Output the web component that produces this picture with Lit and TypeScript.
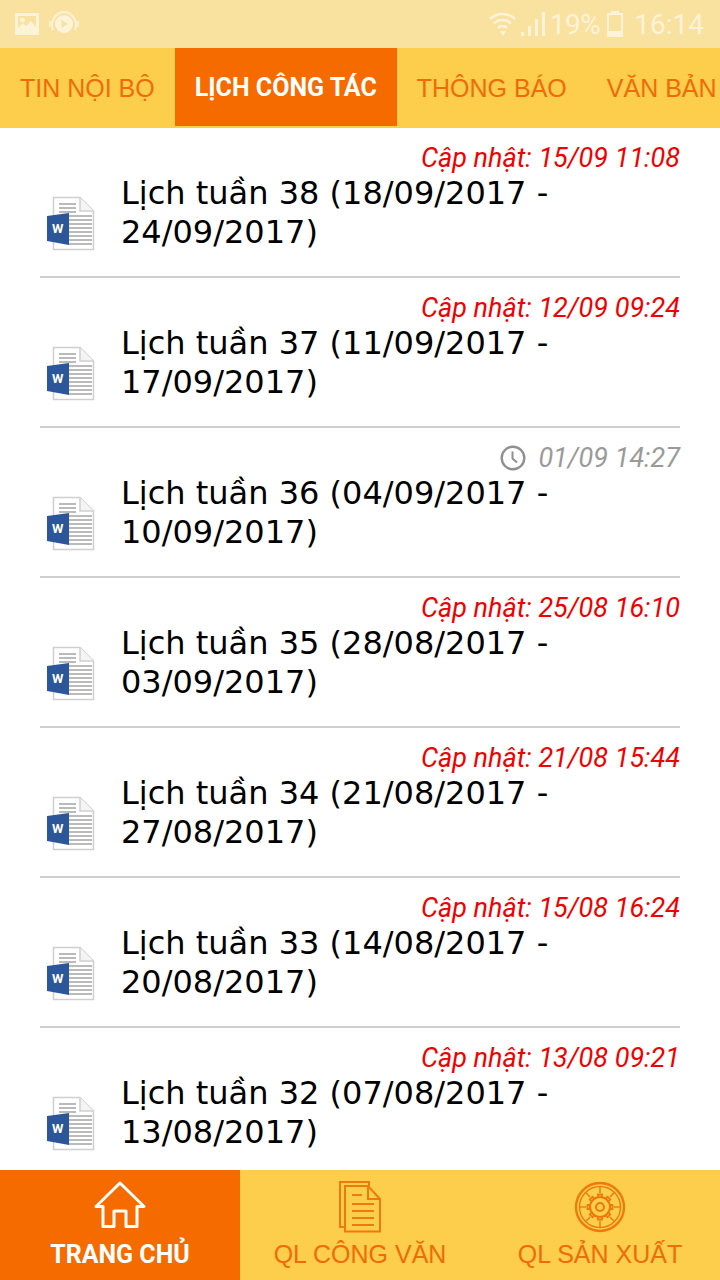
import { LitElement, html, css, svg } from "lit";
import { customElement } from "lit/decorators.js";

const rows = [
  { title: "Lịch tuần 38 (18/09/2017 - 24/09/2017)", date: "15/09 11:08", updated: true },
  { title: "Lịch tuần 37 (11/09/2017 - 17/09/2017)", date: "12/09 09:24", updated: true },
  { title: "Lịch tuần 36 (04/09/2017 - 10/09/2017)", date: "01/09 14:27", updated: false },
  { title: "Lịch tuần 35 (28/08/2017 - 03/09/2017)", date: "25/08 16:10", updated: true },
  { title: "Lịch tuần 34 (21/08/2017 - 27/08/2017)", date: "21/08 15:44", updated: true },
  { title: "Lịch tuần 33 (14/08/2017 - 20/08/2017)", date: "15/08 16:24", updated: true },
  { title: "Lịch tuần 32 (07/08/2017 - 13/08/2017)", date: "13/08 09:21", updated: true },
];

const tabs = ["TIN NỘI BỘ", "LỊCH CÔNG TÁC", "THÔNG BÁO", "VĂN BẢN MỚI"];

const wordIcon = html`<svg class="word" width="50" height="58" viewBox="0 0 50 58">
  <path d="M7.5 1.5H34L47.5 15V53.500H7.500Z" fill="#fff" stroke="#cfcfcf" stroke-width="1.500"/>
  <path d="M34 1.500V15H47.500" fill="#f4f4f4" stroke="#cfcfcf" stroke-width="1.500"/>
  ${[8, 12, 16].map((y) => svg`<path d="M13 ${y}H30" stroke="#a9a9a9" stroke-width="1.600"/>`)}
  ${[20, 24, 28, 32, 36, 40, 44, 48].map((y) => svg`<path d="M23 ${y}H46" stroke="#a9a9a9" stroke-width="1.600"/>`)}
  <path d="M1 20L23 17V49L1 45Z" fill="#2b579a"/>
  <text x="6" y="37" font-family="Roboto, sans-serif" font-size="13" font-weight="700" fill="#fff">W</text>
</svg>`;

const clockIcon = html`<svg class="clock" width="26" height="26" viewBox="0 0 26 26" fill="none" stroke="#8f8f8f" stroke-width="2.400">
  <circle cx="13" cy="13" r="11.300"/>
  <path d="M12.500 6.500V13.500L17 17.500" stroke-width="2"/>
</svg>`;

const homeIcon = html`<svg width="52" height="48" viewBox="0 0 52 48" fill="none" stroke="#fff" stroke-width="3" stroke-linejoin="round" stroke-linecap="round">
  <path d="M2 25.500L26 2L50 25.500H43V45.500H32V30H20V45.500H9V25.500Z"/>
</svg>`;

const docIcon = html`<svg width="44" height="52" viewBox="0 0 44 52" fill="none" stroke="#ec7a0c" stroke-width="2">
  <path d="M7 46H2V1H31V5"/>
  <path d="M7 5H30L42 18V50.500H7Z"/>
  <path d="M30 5V18H42"/>
  <path d="M14 14H24M14 23H36M14 30H36M14 37H36M14 44H36" stroke-width="2.200"/>
</svg>`;

const spokes = [0, 45, 90, 135, 180, 225, 270, 315];
const teeth = [0, 45, 90, 135, 180, 225, 270, 315];
const gearIcon = html`<svg width="52" height="52" viewBox="0 0 52 52" fill="none" stroke="#ec7a0c">
  <circle cx="26" cy="26" r="24" stroke-width="2.400"/>
  <circle cx="26" cy="26" r="20.500" stroke-width="1.400"/>
  ${spokes.map((a) => svg`<path d="M26 6V12" stroke-width="1.400" transform="rotate(${a} 26 26)"/>`)}
  <circle cx="26" cy="26" r="10" stroke-width="2"/>
  ${teeth.map((a) => svg`<path d="M24 16.500V13.500H28V16.500" stroke-width="1.800" transform="rotate(${a} 26 26)"/>`)}
  <circle cx="26" cy="26" r="4" stroke-width="2"/>
</svg>`;

@customElement("app-root")
export class AppRoot extends LitElement {
  static styles = css`
    :host {
      display: flex;
      flex-direction: column;
      width: 720px;
      height: 1280px;
      overflow: hidden;
      background: #fff;
    }
    .status {
      height: 48px;
      flex: none;
      display: flex;
      align-items: center;
      background: #f9e1a0;
      color: #fdf3d8;
      padding: 0 16px 0 14px;
    }
    .status-left {
      display: flex;
      align-items: center;
      gap: 9px;
    }
    .status-right {
      margin-left: auto;
      display: flex;
      align-items: center;
      font: 400 28px Roboto, sans-serif;
    }
    .pct {
      margin: 0 6px 0 4px;
      letter-spacing: -0.500px;
    }
    .tabs {
      height: 80px;
      flex: none;
      display: flex;
      align-items: flex-start;
      background: #fcce4c;
      overflow: hidden;
      white-space: nowrap;
    }
    .tab {
      flex: none;
      height: 78px;
      line-height: 80px;
      padding: 0 20px;
      font: 400 25px/80px "Liberation Sans", sans-serif;
      color: #ee6c0a;
    }
    .tab.active {
      background: #f56b00;
      color: #fff;
      font: 700 25px/80px Roboto, sans-serif;
    }
    .list {
      flex: 1;
      min-height: 0;
      overflow: hidden;
    }
    .row {
      height: 150px;
      box-sizing: border-box;
      margin: 0 40px;
      border-bottom: 2px solid #cfcfcf;
      display: flex;
      flex-direction: column;
    }
    .date {
      height: 60px;
      flex: none;
      display: flex;
      align-items: center;
      justify-content: flex-end;
      gap: 12px;
      font: italic 400 27px Roboto, sans-serif;
      color: #f00000;
    }
    .date.old {
      color: #9a9a9a;
    }
    .body {
      display: flex;
      align-items: flex-start;
    }
    .word {
      flex: none;
      margin: 8px 0 0 6px;
    }
    .title {
      margin: -14px 0 0 25px;
      width: 470px;
      font: 400 32px/39px "DejaVu Sans", sans-serif;
      color: #000;
    }
    .nav {
      height: 110px;
      flex: none;
      display: grid;
      grid-template-columns: repeat(3, 240px);
      background: #fcce4c;
    }
    .nav-item {
      display: flex;
      flex-direction: column;
      align-items: center;
      color: #ee6c0a;
      font: 400 25px "Liberation Sans", sans-serif;
    }
    .nav-item.active {
      background: #f56b00;
      color: #fff;
      font: 700 25px Roboto, sans-serif;
    }
    .nav-icon {
      height: 56px;
      margin-top: 11px;
      display: flex;
      align-items: flex-start;
    }
    .nav-label {
      margin-top: 3px;
    }
  `;

  render() {
    return html`
      <div class="status">
        <div class="status-left">
          <svg width="26" height="24" viewBox="0 0 26 24">
            <path fill-rule="evenodd" fill="#fdf3d8" d="M1 1H25V23H1ZM4 4V16L9 11L12 14L17 9L22 15V4Z"/>
            <circle cx="8.500" cy="8" r="2.500" fill="#fdf3d8"/>
          </svg>
          <svg width="30" height="28" viewBox="0 0 30 28" fill="none" stroke="#fdf3d8">
            <circle cx="15" cy="14" r="9" fill="#fdf3d8" stroke="none"/>
            <path d="M12.500 10L19 14L12.500 18Z" fill="#f9e1a0" stroke="none"/>
            <path d="M4 20A13 13 0 0 1 15 2A13 13 0 0 1 26 20" stroke-width="2"/>
            <path d="M1 17A15 15 0 0 1 1 11M29 17A15 15 0 0 0 29 11" stroke-width="1.500"/>
          </svg>
        </div>
        <div class="status-right">
          <svg width="30" height="28" viewBox="0 0 30 28" fill="none" stroke="#fdf3d8" stroke-width="2.500">
            <path d="M2 9A18 18 0 0 1 27 9M6 13.500A12 12 0 0 1 23 13.500M10 18A6 6 0 0 1 19 18"/>
            <path d="M12 21H18L15 26Z" fill="#fdf3d8" stroke="none"/>
          </svg>
          <svg width="28" height="26" viewBox="0 0 28 26" fill="#fdf3d8">
            <path d="M3 21H6V25H3ZM10 15H13V25H10ZM17 8H20V25H17ZM24 1H27V25H24Z"/>
          </svg>
          <span class="pct">19%</span>
          <svg width="18" height="26" viewBox="0 0 18 26" fill="#fdf3d8">
            <path fill-rule="evenodd" d="M5 0H13V2H17V26H1V2H5ZM3 4V20H15V4Z"/>
          </svg>
          <span style="margin-left:10px">16:14</span>
        </div>
      </div>
      <div class="tabs">
        ${tabs.map((t, i) => html`<div class="tab ${i === 1 ? "active" : ""}">${t}</div>`)}
      </div>
      <div class="list">
        ${rows.map(
          (r) => html`
            <div class="row">
              <div class="date ${r.updated ? "" : "old"}">
                ${r.updated ? html`<span>Cập nhật: ${r.date}</span>` : html`${clockIcon}<span>${r.date}</span>`}
              </div>
              <div class="body">
                ${wordIcon}
                <div class="title">${r.title}</div>
              </div>
            </div>
          `
        )}
      </div>
      <div class="nav">
        <div class="nav-item active"><div class="nav-icon">${homeIcon}</div><div class="nav-label">TRANG CHỦ</div></div>
        <div class="nav-item"><div class="nav-icon">${docIcon}</div><div class="nav-label">QL CÔNG VĂN</div></div>
        <div class="nav-item"><div class="nav-icon">${gearIcon}</div><div class="nav-label">QL SẢN XUẤT</div></div>
      </div>
    `;
  }
}
